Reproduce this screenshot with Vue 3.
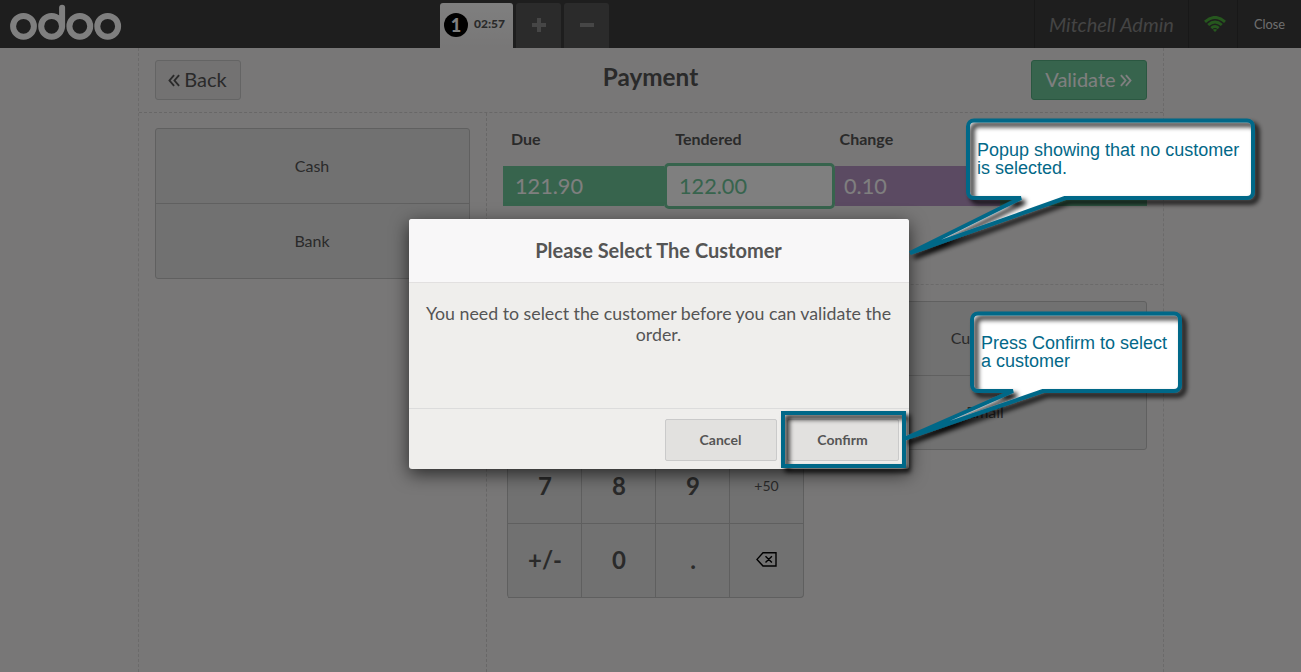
<script setup>
const keys = [
  '', '', '', '',
  '', '', '', '',
  '7', '8', '9', '+50',
  '+/-', '0', '.', 'back',
]
const methods = ['Cash', 'Bank']
const actions = ['Customer', 'Email']
</script>

<template>
  <div class="pos">
    <header class="topbar">
      <svg class="logo" width="112" height="36" viewBox="0 0 112 36" fill="none" stroke="#fff" stroke-width="6">
        <circle cx="13.5" cy="22.3" r="10.4" />
        <circle cx="41.6" cy="22.3" r="10.4" />
        <circle cx="69.8" cy="22.3" r="10.4" />
        <circle cx="97.7" cy="22.3" r="10.4" />
        <path d="M52.1 22.3V3.7" stroke-linecap="round" />
      </svg>
      <div class="tabs">
        <div class="tab active"><span class="num">1</span><span class="time">02:57</span></div>
        <div class="tab small">
          <svg width="14" height="14" viewBox="0 0 14 14" fill="#8c8c8c"><path d="M5 0h4v5h5v4H9v5H5V9H0V5h5z" /></svg>
        </div>
        <div class="tab small">
          <svg width="14" height="14" viewBox="0 0 14 14" fill="#8c8c8c"><path d="M0 5h14v4H0z" /></svg>
        </div>
      </div>
      <div class="right">
        <div class="user">Mitchell Admin</div>
        <div class="wifi">
          <svg width="22" height="16" viewBox="0 0 22 16" fill="none" stroke="#4caf3c" stroke-width="2.9">
            <path d="M1 5.800Q11-3 21 5.800M4.200 9Q11 3.100 17.800 9M7.300 12.100Q11 8.900 14.700 12.100" />
            <path d="M8.800 13.700Q11 12.100 13.200 13.700L11 16z" fill="#4caf3c" stroke="none" />
          </svg>
        </div>
        <div class="close">Close</div>
      </div>
    </header>

    <main class="screen">
      <div class="head">
        <button class="btn back">
          <svg width="12" height="13" viewBox="0 0 12 13" fill="none" stroke="#555" stroke-width="1.9"><path d="M6.100 1.200L1.500 6.500l4.600 5.300M11.100 1.200L6.500 6.500l4.600 5.300" /></svg>
          <span>Back</span>
        </button>
        <h1>Payment</h1>
        <button class="btn next">
          <span>Validate</span>
          <svg width="12" height="13" viewBox="0 0 12 13" fill="none" stroke="#fff" stroke-width="1.9"><path d="M.9 1.200l4.600 5.300-4.600 5.300M5.900 1.200l4.600 5.300-4.600 5.300" /></svg>
        </button>
      </div>
      <div class="columns">
        <aside class="left">
          <div class="list">
            <div v-for="m in methods" :key="m" class="item">{{ m }}</div>
          </div>
        </aside>
        <section class="content">
          <div class="lines">
            <div class="labels"><span>Due</span><span>Tendered</span><span>Change</span></div>
            <div class="values">
              <div class="due">121.90</div>
              <div class="tendered">122.00</div>
              <div class="change">0.10</div>
              <div class="method"></div>
            </div>
          </div>
          <div class="bottom">
            <div class="numpad">
              <div v-for="(k, i) in keys" :key="i" class="key" :class="{ mode: i % 4 === 3 }">
                <svg v-if="k === 'back'" width="21" height="15" viewBox="0 0 21 15" fill="none" stroke="#000" stroke-width="1.4">
                  <path d="M7 .8h13v13.2H7L1 7.4zM9.500 4.200l6.400 6.400M15.900 4.200l-6.400 6.400" />
                </svg>
                <template v-else>{{ k }}</template>
              </div>
            </div>
            <div class="list actions">
              <div v-for="a in actions" :key="a" class="item">{{ a }}</div>
            </div>
          </div>
        </section>
      </div>
    </main>

    <div class="overlay">
      <div class="dialog">
        <div class="title">Please Select The Customer</div>
        <div class="body">You need to select the customer before you can validate the order.</div>
        <div class="foot">
          <button class="action">Cancel</button>
          <button class="action">Confirm</button>
        </div>
      </div>
    </div>

    <svg class="notes" width="1301" height="672" viewBox="0 0 1301 672">
      <defs>
        <filter id="shade" filterUnits="userSpaceOnUse" x="760" y="90" width="530" height="410">
          <feDropShadow dx="4" dy="4" stdDeviation="2.8" flood-color="#000" flood-opacity="1" />
        </filter>
      </defs>
      <g fill="#fff">
        <path d="M974 120.500H1247a6 6 0 0 1 6 6V192a6 6 0 0 1-6 6H1065L910 253 1021 198H974a6 6 0 0 1-6-6V126.500a6 6 0 0 1 6-6z" />
        <path d="M978 313.500H1174a6 6 0 0 1 6 6V385a6 6 0 0 1-6 6H1043L905 438.500 1013 391H978a6 6 0 0 1-6-6V319.500a6 6 0 0 1 6-6z" />
      </g>
      <g fill="none" stroke="#036888" stroke-width="4" stroke-linejoin="bevel" filter="url(#shade)">
        <path d="M974 120.500H1247a6 6 0 0 1 6 6V192a6 6 0 0 1-6 6H1065L910 253 1021 198H974a6 6 0 0 1-6-6V126.500a6 6 0 0 1 6-6z" />
        <path d="M978 313.500H1174a6 6 0 0 1 6 6V385a6 6 0 0 1-6 6H1043L905 438.500 1013 391H978a6 6 0 0 1-6-6V319.500a6 6 0 0 1 6-6z" />
        <path d="M783 413H904V466H783z" stroke-linejoin="miter" />
      </g>
    </svg>
    <div class="note one">Popup showing that no customer<br>is selected.</div>
    <div class="note two">Press Confirm to select<br>a customer</div>
  </div>
</template>

<style>
html, body { margin: 0; overflow: hidden; }
</style>

<style scoped>
.pos { position: relative; width: 1301px; height: 672px; overflow: hidden; background: #f0eeee; color: #555; font: 16px Lato, sans-serif; display: flex; flex-direction: column; }
.pos *, .pos { box-sizing: border-box; }
button { font-family: inherit; color: inherit; margin: 0; }
.topbar { height: 48px; flex: none; background: #3c3c3c; display: flex; position: relative; }
.logo { margin: 4px 0 0 10px; flex: none; }
.tabs { display: flex; gap: 3px; margin: 3px 0 0 318px; }
.tab { height: 45px; width: 45px; border-radius: 3px 3px 0 0; background: #575757; display: flex; align-items: center; justify-content: center; }
.tab.active { width: 73px; background: linear-gradient(#fff, #f0eeee); justify-content: flex-start; padding-left: 4px; }
.num { width: 24px; height: 24px; border-radius: 50%; background: #000; color: #fff; font-weight: 900; font-size: 18px; line-height: 24px; text-align: center; margin-top: -1px; }
.time { font-size: 12px; font-weight: 900; margin: -4px 0 0 6px; }
.small svg { margin-top: -1px; }
.right { margin-left: auto; display: flex; color: #888; }
.right > div { border-left: 1px solid #313131; height: 48px; display: flex; align-items: center; }
.user { width: 154px; padding-left: 14px; font-size: 20px; font-style: italic; white-space: nowrap; }
.wifi { width: 49px; padding-left: 15px; }
.close { width: 64px; padding: 0 0 1px 16px; font-size: 12.8px; color: #ddd; }
.screen { width: 1026px; margin: 0 0 0 138px; flex: 1; border: dashed #d6d4d4; border-width: 0 1px; display: flex; flex-direction: column; }
.head { height: 65px; flex: none; display: flex; justify-content: space-between; padding: 12px 16px 0; border-bottom: 1px dashed #d0cece; }
.btn { height: 40px; border: 1px solid #c8c8c8; border-radius: 3px; background: #e6e4e4; font-size: 20px; display: flex; align-items: center; justify-content: center; padding: 0 1px 2px 0; gap: 4px; }
.btn svg { margin-top: 3px; }
.back { width: 86px; }
.next { width: 116px; background: #6ec89b; border-color: #57af83; color: #fff; }
h1 { font-size: 24.3px; line-height: 30px; margin: 2px 0 0 29px; font-weight: 700; }
.columns { flex: 1; display: flex; min-height: 0; }
.left { width: 348px; padding: 15px 0 0 16px; border-right: 1px dashed #d0cece; flex: none; }
.list { border: 1px solid #c0c0c0; border-radius: 3px; background: #e2e2e2; width: 315px; height: 151px; display: flex; flex-direction: column; }
.item { flex: 1; display: flex; align-items: center; justify-content: center; padding: 0 1px 1px 0; }
.item + .item { border-top: 1px solid #c0c0c0; }
.content { flex: 1; }
.lines { height: 172px; border-bottom: 1px dashed #d6d4d4; padding: 16px 16px 0; }
.labels { display: flex; font-weight: 700; height: 37px; line-height: 20px; padding-left: 8px; }
.labels span { width: 164.300px; }
.values { display: flex; height: 40px; font-size: 21.7px; line-height: 40px; color: #fff; }
.values > div { padding-left: 12px; }
.due { width: 161px; background: #6ec89b; }
.values > .tendered { width: 171px; height: 46px; margin-top: -3px; border: 3px solid #6ec89b; border-radius: 5px; background: #fff; color: #6ec89b; padding-left: 12px; }
.values > .change { width: 165px; background: #b794c5; padding-left: 9px; }
.method { flex: 1; background: #6ec89b; }
.bottom { display: flex; padding: 16px 16px 0 20px; justify-content: space-between; }
.numpad { width: 297px; height: 297px; display: grid; grid-template-columns: repeat(4, 74px); grid-auto-rows: 74px; border: solid #bebebe; border-width: 1px 0 0 1px; border-radius: 4px; background: #e2e2e2; }
.key { border: solid #bebebe; border-width: 0 1px 1px 0; display: flex; align-items: center; justify-content: center; font-weight: 700; font-size: 24px; padding: 0 0 2px 1px; }
.key:last-child { border-radius: 0 0 4px 0; }
.key.mode { font-size: 14px; font-weight: 400; padding: 0 0 2px 0; }
.key:last-child svg { margin: 0 1px 1px 0; }
.actions { width: 323px; height: 149px; }
.actions .item { padding-bottom: 3px; }
.overlay { position: absolute; inset: 0; background: rgba(0, 0, 0, .5); }
.dialog { position: absolute; left: 409px; top: 219px; width: 500px; height: 250px; border-radius: 3px; background: #efeeec; box-shadow: 0 5px 18px rgba(0, 0, 0, .65); display: flex; flex-direction: column; text-align: center; }
.title { height: 64px; background: #f8f7f8; border-bottom: 1px solid #e2e0e0; border-radius: 3px 3px 0 0; font-size: 20px; font-weight: 700; line-height: 63px; padding-right: 1px; }
.body { flex: 1; font-size: 17.75px; line-height: 21px; padding: 20px 16px 0 15px; }
.foot { height: 61px; border-top: 1px solid #dcdcdc; padding: 10px 10px 0; display: flex; justify-content: flex-end; gap: 10px; }
.action { width: 112px; height: 42px; border: 1px solid #cacaca; border-radius: 2px; background: #e2e1df; font-size: 14px; font-weight: 700; padding: 0 1px 2px 0; }
.notes { position: absolute; left: 0; top: 0; }
.note { position: absolute; font: 18px/18px "Liberation Sans", sans-serif; color: #036888; white-space: nowrap; }
.one { left: 977px; top: 141px; }
.two { left: 981px; top: 334px; }
</style>
